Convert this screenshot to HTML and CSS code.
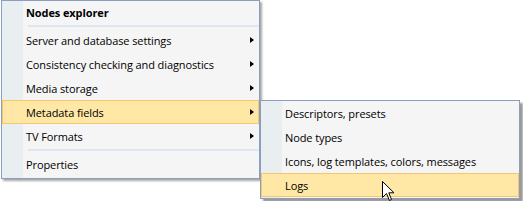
FILE: index.html
```html
<!DOCTYPE html>
<html>
<head>
<meta charset="utf-8">
<link rel="stylesheet" href="styles.css">
</head>
<body>
<div class="menu main">
  <div class="title"><span class="label">Nodes explorer</span></div>
  <div class="sep top"></div>
  <div class="item"><span class="label">Server and database settings</span><span class="arrow"></span></div>
  <div class="item"><span class="label">Consistency checking and diagnostics</span><span class="arrow"></span></div>
  <div class="item"><span class="label">Media storage</span><span class="arrow"></span></div>
  <div class="item hot open"><span class="label">Metadata fields</span><span class="arrow"></span>
    <div class="menu sub">
      <div class="item"><span class="label">Descriptors, presets</span></div>
      <div class="item"><span class="label">Node types</span></div>
      <div class="item"><span class="label">Icons, log templates, colors, messages</span></div>
      <div class="item hot"><span class="label">Logs</span>
        <svg class="cursor" width="13" height="21" viewBox="0 0 13 21"><path d="M0.5 0.5 L0.5 16.5 L4.5 12.5 L7.5 19.5 L9.5 18.5 L6.8 11.8 L12 11.8 Z" fill="#fff" stroke="#000" stroke-width="1" stroke-linejoin="miter"/></svg>
      </div>
    </div>
  </div>
  <div class="item"><span class="label">TV Formats</span><span class="arrow"></span></div>
  <div class="sep"></div>
  <div class="item"><span class="label">Properties</span></div>
</div>
</body>
</html>
```
FILE: styles.css
```css
html, body {
  margin: 0;
  padding: 0;
  background: #ffffff;
}
body {
  width: 523px;
  height: 201px;
  overflow: hidden;
  font-family: "Open Sans", "Noto Sans", sans-serif;
  font-size: 11px;
  letter-spacing: -0.1px;
  color: #000;
}
.menu {
  box-sizing: border-box;
  border: 1px solid #8a9ebd;
  background: linear-gradient(to right, #e9eef0 0, #e9eef0 21px, #f5f5f5 21px);
  box-shadow: 2px 2px 2px rgba(0, 0, 0, 0.35);
  display: flex;
  flex-direction: column;
}
.main {
  margin-left: 1px;
  width: 259px;
  height: 179px;
}
.title {
  height: 23px;
  display: flex;
  align-items: center;
  font-weight: bold;
}
.sep {
  height: 4px;
  margin-left: 26px;
  display: flex;
  align-items: center;
}
.sep.top {
  align-items: flex-start;
  padding-top: 1px;
  box-sizing: border-box;
}
.sep::before {
  content: "";
  flex: 1;
  height: 2px;
  background: #dde6f3;
}
.item {
  position: relative;
  box-sizing: border-box;
  height: 24px;
  display: flex;
  align-items: center;
  border: 1px solid transparent;
}
.label {
  padding-left: 23px;
  flex: 1;
  white-space: nowrap;
}
.title .label {
  padding-left: 24px;
}
.item.hot {
  background: #ffe8a6;
  border-color: #f6c56f;
}
.arrow {
  width: 0;
  height: 0;
  border-top: 3.5px solid transparent;
  border-bottom: 3.5px solid transparent;
  border-left: 4px solid #000;
  margin-right: 4px;
}
.sub {
  position: absolute;
  left: 257px;
  top: -1px;
  width: 260px;
  height: 99px;
  box-shadow: 3px 3px 2px rgba(0, 0, 0, 0.4);
}
.cursor {
  position: absolute;
  left: 120px;
  top: 7px;
}
```
